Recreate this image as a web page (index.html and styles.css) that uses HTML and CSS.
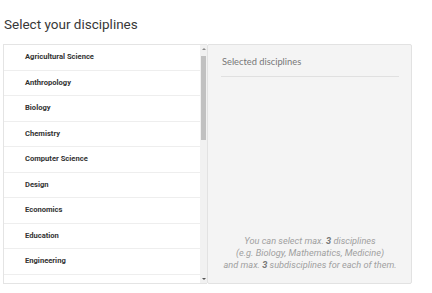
FILE: index.html
```html
<!DOCTYPE html>
<html lang="en">
<head>
  <meta charset="UTF-8">
  <meta name="viewport" content="width=device-width, initial-scale=1.0">
  <title>Select your disciplines</title>
  <link rel="stylesheet" href="styles.css">
</head>
<body>

  <div class="page">
    <h2>Select your disciplines</h2>

    <div class="panels">
      <div class="picker">
        <ul class="list">
          <li>Agricultural Science</li>
          <li>Anthropology</li>
          <li>Biology</li>
          <li>Chemistry</li>
          <li>Computer Science</li>
          <li>Design</li>
          <li>Economics</li>
          <li>Education</li>
          <li>Engineering</li>
          <li></li>
        </ul>
        <div class="scrollbar">
          <span class="arrow up"></span>
          <div class="track"><div class="thumb"></div></div>
          <span class="arrow down"></span>
        </div>
      </div>

      <div class="selected">
        <div class="selected-title">Selected disciplines</div>
        <p class="hint">
          You can select max. <b>3</b> disciplines<br>
          (e.g. Biology, Mathematics, Medicine)<br>
          and max. <b>3</b> subdisciplines for each of them.
        </p>
      </div>
    </div>
  </div>

</body>
</html>
```

FILE: styles.css
```css
body {
  font-family: Roboto, "Liberation Sans", sans-serif;
  background-color: #fff;
  color: #333;
  margin: 0;
  padding: 0;
}
.page {
  padding: 0 20px 0 3px;
}
h2 {
  font-size: 13.5px;
  font-weight: 400;
  color: #383838;
  margin: 0;
  padding: 16px 0 0 1px;
  box-sizing: border-box;
  height: 44px;
}
.panels {
  display: flex;
  height: 240px;
}
.picker {
  width: 204px;
  box-sizing: border-box;
  border: 1px solid #e4e4e4;
  border-right: none;
  display: flex;
  overflow: hidden;
  background-color: #fff;
}
.list {
  list-style: none;
  margin: 0;
  padding: 0;
  flex: 1;
}
.list li {
  height: 24.5px;
  line-height: 24.5px;
  border-bottom: 1px solid #eeeeee;
  padding-left: 21px;
  font-size: 7.6px;
  font-weight: 700;
  color: #333;
}
.scrollbar {
  width: 7px;
  display: flex;
  flex-direction: column;
  background-color: #f1f1f1;
}
.arrow {
  height: 8px;
  display: flex;
  justify-content: center;
  align-items: center;
}
.arrow::after {
  content: "";
  border-left: 2px solid transparent;
  border-right: 2px solid transparent;
}
.arrow.up::after {
  border-bottom: 2px solid #888;
}
.arrow.down::after {
  border-top: 2px solid #555;
}
.track {
  flex: 1;
  padding: 3px 0 0 0;
}
.thumb {
  height: 84px;
  margin: 0 1px;
  background-color: #c1c1c1;
}
.selected {
  width: 205px;
  box-sizing: border-box;
  background-color: #f4f4f4;
  border: 1px solid #e2e2e2;
  border-radius: 2px;
  padding: 0 12px 0 13px;
  display: flex;
  flex-direction: column;
  font-family: Lato, Roboto, sans-serif;
}
.selected-title {
  font-size: 9.3px;
  color: #777;
  padding: 11px 0 9px 1px;
  border-bottom: 1px solid #e0e0e0;
}
.hint {
  margin: auto 0 12px 0;
  text-align: center;
  font-family: Roboto, sans-serif;
  font-style: italic;
  font-size: 9.2px;
  line-height: 12px;
  color: #a0a0a0;
}
.hint b {
  color: #777;
}
```
